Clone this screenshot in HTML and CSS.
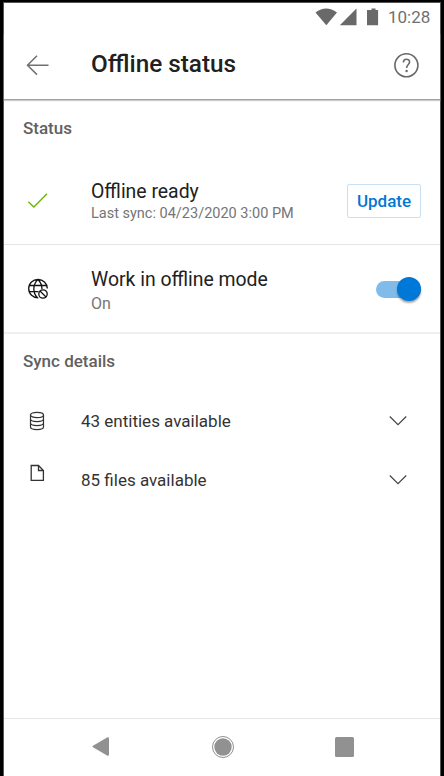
FILE: index.html
```html
<!DOCTYPE html>
<html lang="en">
<head>
<meta charset="utf-8">
<title>Offline status</title>
<link rel="stylesheet" href="styles.css">
</head>
<body>
<div class="screen">
  <div class="statusbar">
    <svg class="signals" width="66" height="20" viewBox="0 0 66 20" fill="#696969">
      <path d="M0.5 4.500Q11.200-3.500 22 4.500L11.300 17.200Z"/>
      <path d="M41.500 .5V17.300H24.800Z"/>
      <path d="M56.500 .5h4v1.500h2.600v15.300H52V2h4.500z"/>
    </svg>
    <span class="clock">10:28</span>
  </div>
  <header class="appbar">
    <svg class="back" width="24" height="22" viewBox="0 0 24 22" fill="none" stroke="#707070" stroke-width="1.500"><path d="M22.500 11.300H1.500M11 1.800L1.500 11.300l9.500 9.300"/></svg>
    <h1>Offline status</h1>
    <svg class="help" width="26" height="26" viewBox="0 0 26 26" fill="none" stroke="#696969" stroke-width="1.600"><circle cx="12.400" cy="13.200" r="11.500"/><path d="M9.400 10.400C9.400 6.200 15.600 6.200 15.600 10.100C15.600 12.500 12.600 12.600 12.600 15.900"/><circle cx="12.600" cy="19" r="1.200" fill="#696969" stroke="none"/></svg>
  </header>
  <h2 class="status-heading">Status</h2>
  <section class="row">
    <svg class="icon" width="22" height="22" viewBox="0 0 22 22" fill="none" stroke="#6bb700" stroke-width="1.350"><path d="M1.300 11.800L6.900 17L20 3.800"/></svg>
    <div class="copy">
      <div class="title">Offline ready</div>
      <div class="sub sync">Last sync: 04/23/2020 3:00 PM</div>
    </div>
    <button class="update">Update</button>
  </section>
  <section class="row mode">
    <svg class="icon globe" width="22" height="22" viewBox="0 0 22 22" fill="none" stroke="#111" stroke-width="1.300">
      <path d="M11.300 19.900C6 19.800 1.700 16 1.700 10.500S6 1.500 11 1.500S20.200 5.400 20.300 10.500M3 7.500H19.300M2 13.700H11.500M11 1.500C5.500 6.500 5.500 15 10.500 19.700M11 1.500C14 4.500 14.900 7.300 15 11"/>
      <circle cx="16" cy="16" r="4.200"/><path d="M13 13l6 6"/>
    </svg>
    <div class="copy">
      <div class="title">Work in offline mode</div>
      <div class="sub">On</div>
    </div>
    <span class="switch"><span class="thumb"></span></span>
  </section>
  <h2 class="details-heading">Sync details</h2>
  <section class="detail">
    <svg class="icon" width="22" height="22" viewBox="0 0 22 22" fill="none" stroke="#333" stroke-width="1.200"><ellipse cx="11" cy="5" rx="6.500" ry="2.600"/><path d="M4.500 5v12c0 3.400 13 3.400 13 0V5M4.500 9c0 3.400 13 3.400 13 0M4.500 13c0 3.400 13 3.400 13 0"/></svg>
    <span class="label">43 entities available</span>
    <svg width="18" height="12" viewBox="0 0 18 12" fill="none" stroke="#444" stroke-width="1.200"><path d="M.8 1.500L9 9.700L17.200 1.500"/></svg>
  </section>
  <section class="detail files">
    <svg class="icon file" width="22" height="22" viewBox="0 0 22 22" fill="none" stroke="#333" stroke-width="1.300"><path d="M5.200 3.500H12.500L17.400 8.500V18.400H5.200ZM12.500 3.500V8.500H17.400"/></svg>
    <span class="label">85 files available</span>
    <svg width="18" height="12" viewBox="0 0 18 12" fill="none" stroke="#444" stroke-width="1.200"><path d="M.8 1.500L9 9.700L17.200 1.500"/></svg>
  </section>
  <nav>
    <svg width="18" height="20" viewBox="0 0 18 20" fill="#919191" stroke="#919191" stroke-width="2" stroke-linejoin="round"><path d="M16 1.200V17.800L1.500 9.500Z"/></svg>
    <svg width="24" height="24" viewBox="0 0 24 24"><circle cx="12" cy="12" r="10.500" fill="none" stroke="#919191"/><circle cx="12" cy="12" r="8.700" fill="#919191"/></svg>
    <svg width="19" height="20" viewBox="0 0 19 20"><rect width="19" height="20" rx="1.500" fill="#919191"/></svg>
  </nav>
</div>
</body>
</html>
```
FILE: styles.css
```css
* { box-sizing: border-box; }
body { margin: 0; background: #000; font-family: Roboto, sans-serif; }
svg { display: block; flex: none; }
h1, h2 { margin: 0; font-weight: 500; }
.screen {
  display: flex;
  flex-direction: column;
  height: 774px;
  margin: 2px 3px 0 3px;
  background: #fff;
  border: 1px solid #555;
  border-bottom: 0;
}
.statusbar {
  display: flex;
  justify-content: flex-end;
  height: 30px;
  padding: 5px 9px 0 0;
}
.clock {
  width: 43px;
  margin-left: 7px;
  font-size: 17px;
  line-height: 19px;
  color: #707070;
  white-space: nowrap;
}
.appbar {
  display: flex;
  align-items: center;
  height: 67px;
  padding: 0 20px 3px 22px;
  border-bottom: 1px solid #a0a3a0;
  box-shadow: 0 1px 1px #ccc;
}
h1 {
  flex: 1;
  margin: 0 0 2px 41px;
  font-size: 24.3px;
  line-height: 28px;
  color: #212121;
}
h2 {
  padding-left: 19px;
  font-size: 17px;
  line-height: 20px;
  color: #616161;
}
.status-heading { margin-top: 18px; }
.details-heading { margin-top: 17px; }
.row {
  display: flex;
  align-items: center;
  height: 107px;
  padding: 19px 19px 0 23px;
  border-bottom: 1px solid #e6e6e6;
}
.row.mode {
  height: 89px;
  padding-top: 2px;
  border-bottom: 2px solid #f0f0f0;
}
.copy { flex: 1; margin: 4px 0 0 42px; white-space: nowrap; }
.title { font-size: 19.4px; line-height: 25px; color: #212121; }
.sub { font-size: 16px; line-height: 24px; color: #757575; }
.sync { font-size: 14.5px; line-height: 22px; margin: -1px 0 1px; }
.globe { margin-bottom: 2px; }
.update {
  width: 74px;
  height: 34px;
  padding: 0;
  border: 1px solid #c7e0f4;
  border-radius: 2px;
  background: #fff;
  color: #0078d4;
  font: 500 17px/20px Roboto, sans-serif;
}
.switch {
  position: relative;
  width: 45px;
  height: 17px;
  border-radius: 9px;
  background: #80bbea;
}
.thumb {
  position: absolute;
  top: -4px;
  right: 0;
  width: 24px;
  height: 24px;
  border-radius: 50%;
  background: #0078d7;
  box-shadow: 0 2px 2px rgba(0, 0, 0, .35);
}
.detail {
  display: flex;
  align-items: center;
  height: 59px;
  margin-top: 20px;
  padding: 0 33px 0 22px;
}
.detail.files { margin-top: 0; }
.label {
  flex: 1;
  margin-left: 33px;
  font-size: 17px;
  line-height: 20px;
  color: #333;
}
.file { margin-bottom: 14px; }
nav {
  display: flex;
  align-items: center;
  justify-content: space-between;
  height: 58px;
  margin-top: auto;
  padding: 0 86px 2px 88px;
  border-top: 1px solid #e6e6e6;
}
```
